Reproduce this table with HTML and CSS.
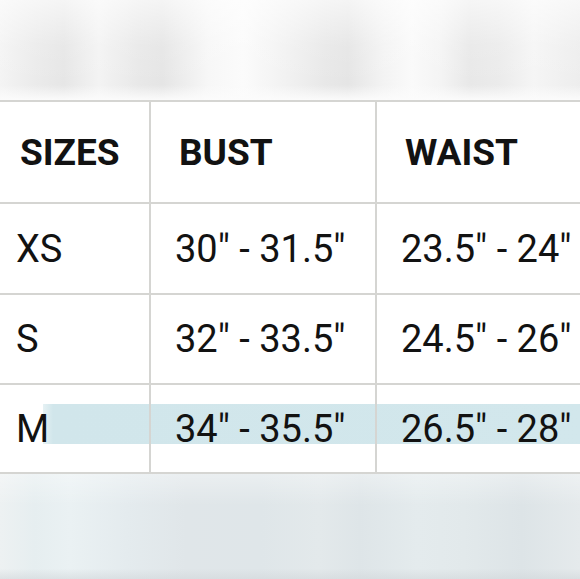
FILE: index.html
```html
<!DOCTYPE html>
<html lang="en">
<head>
<meta charset="utf-8">
<title>Size chart</title>
<link rel="stylesheet" href="styles.css">
</head>
<body>
<div class="page">
  <div class="blur-top"></div>
  <div class="chart">
    <div class="row head">
      <div class="cell first">SIZES</div>
      <div class="cell">BUST</div>
      <div class="cell">WAIST</div>
    </div>
    <div class="row r-xs">
      <div class="cell first">XS</div>
      <div class="cell">30" - 31.5"</div>
      <div class="cell">23.5" - 24"</div>
    </div>
    <div class="row r-s">
      <div class="cell first">S</div>
      <div class="cell">32" - 33.5"</div>
      <div class="cell">24.5" - 26"</div>
    </div>
    <div class="row r-m highlighted">
      <div class="cell first">M</div>
      <div class="cell">34" - 35.5"</div>
      <div class="cell">26.5" - 28"</div>
    </div>
  </div>
  <div class="blur-bottom"></div>
</div>
</body>
</html>
```

FILE: styles.css
```css
html, body {
  margin: 0;
  padding: 0;
}
body {
  width: 580px;
  height: 579px;
  overflow: hidden;
  background: #ffffff;
  font-family: Roboto, "Liberation Sans", sans-serif;
  color: #121212;
}
.page {
  display: flex;
  flex-direction: column;
  width: 580px;
  height: 579px;
  overflow: hidden;
}
.blur-top {
  flex: 0 0 100px;
  background:
    linear-gradient(180deg, rgba(255,255,255,0.6) 0%, rgba(255,255,255,0.1) 45%, rgba(255,255,255,0) 85%, rgba(252,252,252,0.95) 100%),
    linear-gradient(90deg, #f4f4f4 0%, #ebebeb 6%, #e6e6e6 11%, #f3f3f3 17%, #e8e8e8 24%, #e5e5e5 28%, #f7f7f7 36%, #fbfbfb 42%, #f2f2f2 49%, #e8e8e8 56%, #e5e5e5 60%, #f3f3f3 66%, #fafafa 71%, #f4f4f4 76%, #e8e8e8 81%, #ebebeb 86%, #f5f5f5 92%, #ededed 100%);
}
.chart {
  width: 603px;
  border-top: 2px solid #d5d5d2;
}
.row {
  position: relative;
  display: grid;
  grid-template-columns: 151px 226px 226px;
  border-bottom: 2px solid #d5d5d2;
  background: #ffffff;
}
.head { height: 100px; }
.r-xs { height: 89px; }
.r-s { height: 88px; }
.r-m { height: 87px; }
.cell {
  position: relative;
  z-index: 1;
  display: flex;
  align-items: center;
  padding-left: 24px;
  border-right: 2px solid #d5d5d2;
  font-size: 38px;
  font-weight: 400;
  white-space: nowrap;
}
.cell.first {
  padding-left: 16px;
}
.head .cell {
  font-size: 37px;
  font-weight: 700;
  padding-left: 28px;
}
.head .cell.first {
  padding-left: 20px;
}
.highlighted::before {
  content: "";
  position: absolute;
  z-index: 0;
  left: 43px;
  right: 0;
  top: 19px;
  height: 40px;
  background: linear-gradient(90deg, rgba(209,230,235,0.55) 0px, #d1e6eb 10px, #d2e7ec 100%);
}
.blur-bottom {
  flex: 1 1 auto;
  background:
    linear-gradient(180deg, rgba(255,255,255,0.35) 0%, rgba(255,255,255,0) 30%, rgba(255,255,255,0) 90%, rgba(210,215,218,0.6) 100%),
    linear-gradient(90deg, #edf1f2 0%, #e6eef0 6%, #eaf1f3 12%, #e4ebee 22%, #e0e6e9 32%, #dfe6e9 45%, #e3e9eb 55%, #dee5e8 62%, #e4ebed 72%, #e2e9eb 80%, #dde4e7 90%, #e5eaec 100%);
}
```
